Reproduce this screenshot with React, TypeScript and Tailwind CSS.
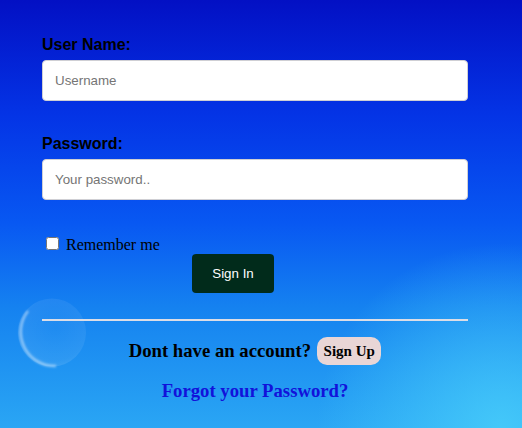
import { useState } from "react";

const Bubble = () => (
    <svg className="absolute left-[14px] top-[294px]" width="78" height="78" viewBox="0 0 78 78">
        <defs>
            <radialGradient id="bubbleFill" cx="55%" cy="45%" r="55%">
                <stop offset="0%" stopColor="#ffffff" stopOpacity="0.03" />
                <stop offset="85%" stopColor="#ffffff" stopOpacity="0.07" />
                <stop offset="100%" stopColor="#ffffff" stopOpacity="0.12" />
            </radialGradient>
            <filter id="soft">
                <feGaussianBlur stdDeviation="1" />
            </filter>
        </defs>
        <circle cx="38" cy="38.5" r="34" fill="url(#bubbleFill)" />
        <path d="M 14 17 A 34 34 0 0 0 42 72" fill="none" stroke="#ffffff" strokeOpacity="0.45" strokeWidth="2.5" filter="url(#soft)" />
    </svg>
);

const App = () => {
    const [remember, setRemember] = useState(false);

    return (
        <div className="relative h-[428px] w-full overflow-hidden bg-[radial-gradient(circle_at_96%_100%,rgba(72,206,250,0.85),rgba(72,206,250,0)_28%),linear-gradient(180deg,#0310c4_0%,#0434e6_27%,#0858f2_52%,#1582f0_72%,#2aa6f4_100%)]">
            <Bubble />
            <form className="relative ml-[42px] w-[426px] pt-[36px]" onSubmit={(e) => e.preventDefault()}>
                <label className="block font-['Liberation_Sans',Arial,sans-serif] text-[16px] font-bold leading-[18px] text-black mb-[6px]">
                    User Name:
                </label>
                <input
                    type="text"
                    placeholder="Username"
                    className="block h-[41px] w-full rounded-[4px] border border-[#cfcfd4] bg-white px-[12px] font-['Liberation_Sans',Arial,sans-serif] text-[13.33px] text-black placeholder:text-[#757575] outline-none"
                />

                <label className="mt-[34px] block font-['Liberation_Sans',Arial,sans-serif] text-[16px] font-bold leading-[18px] text-black mb-[6px]">
                    Password:
                </label>
                <input
                    type="password"
                    placeholder="Your password.."
                    className="block h-[41px] w-full rounded-[4px] border border-[#cfcfd4] bg-white px-[12px] font-['Liberation_Sans',Arial,sans-serif] text-[13.33px] text-black placeholder:text-[#757575] outline-none"
                />

                <div className="mt-[36px] flex items-start">
                    <input
                        type="checkbox"
                        checked={remember}
                        onChange={() => setRemember(!remember)}
                        className="mt-[1px] ml-[4px] mr-[7px] h-[13px] w-[13px]"
                    />
                    <span className="font-['Liberation_Serif','Times_New_Roman',serif] text-[16px] leading-[18px] text-black">
                        Remember me
                    </span>
                </div>

                <button
                    type="submit"
                    className="ml-[150px] block h-[39px] w-[82px] rounded-[4px] bg-[#012b1b] font-['Liberation_Sans',Arial,sans-serif] text-[13.33px] text-white"
                >
                    Sign In
                </button>

                <div className="mt-[26px] h-[2px] w-full bg-[#dcdde6]"></div>

                <div className="mt-[16px] flex items-center justify-center gap-[6px]">
                    <h3 className="font-['Liberation_Serif','Times_New_Roman',serif] text-[18.72px] font-bold leading-[22px] text-black">
                        Dont have an account?
                    </h3>
                    <button
                        type="button"
                        className="h-[28px] rounded-[10px] bg-[#e9d6d6] px-[6.5px] font-['Liberation_Serif','Times_New_Roman',serif] text-[15px] font-bold text-black"
                    >
                        Sign Up
                    </button>
                </div>

                <h3 className="mt-[15px] text-center font-['Liberation_Serif','Times_New_Roman',serif] text-[18.72px] font-bold leading-[22px] text-[#1212da]">
                    Forgot your Password?
                </h3>
            </form>
        </div>
    );
};

export default App;
